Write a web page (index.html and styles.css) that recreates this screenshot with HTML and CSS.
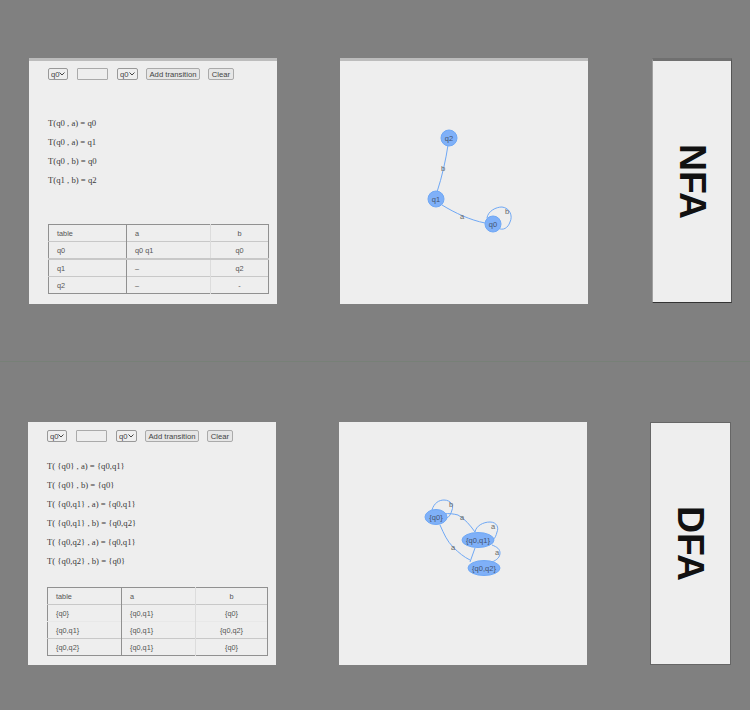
FILE: index.html
```html
<!DOCTYPE html>
<html lang="en">
<head>
    <meta charset="UTF-8">
    <title>NFA to DFA</title>
    <link rel="stylesheet" href="styles.css">
</head>
<body>
    <!-- NFA -->
    <section class="automaton automaton-nfa">
        <div class="card editor">
            <form class="controls">
                <select class="state-select"><option>q0</option></select>
                <input class="symbol-input" type="text">
                <select class="state-select"><option>q0</option></select>
                <button type="button">Add transition</button>
                <button type="button">Clear</button>
            </form>
            <ul class="transitions">
                <li>T(q0 , a) = q0</li>
                <li>T(q0 , a) = q1</li>
                <li>T(q0 , b) = q0</li>
                <li>T(q1 , b) = q2</li>
            </ul>
            <table class="state-table">
                <tr><td>table</td><td>a</td><td class="center">b</td></tr>
                <tr><td>q0</td><td>q0 q1</td><td class="center">q0</td></tr>
                <tr class="row-thick"><td>q1</td><td>–</td><td class="center">q2</td></tr>
                <tr><td>q2</td><td>–</td><td class="center">-</td></tr>
            </table>
        </div>
        <div class="card graph">
            <svg class="graph-svg" viewBox="0 0 248 243">
                <path class="edge" d="M108 84C106 98 102 116 97 131"/>
                <path class="edge" d="M102 144C115 152 130 159 145 162"/>
                <path class="edge" d="M147 157C148 150 156 146 162 146C170 147 173 155 170 161C168 167 163 170 158 167"/>
                <circle class="node" cx="109" cy="77" r="8"/>
                <circle class="node" cx="96" cy="138" r="8"/>
                <circle class="node" cx="153" cy="163" r="8"/>
                <text class="node-label" x="109" y="79.500">q2</text>
                <text class="node-label" x="96" y="140.500">q1</text>
                <text class="node-label" x="153" y="165.500">q0</text>
                <text class="edge-label" x="103" y="109.500">b</text>
                <text class="edge-label" x="122" y="157.500">a</text>
                <text class="edge-label" x="167" y="152.500">b</text>
            </svg>
        </div>
        <div class="card title"><span class="title-text">NFA</span></div>
    </section>

    <!-- DFA -->
    <section class="automaton automaton-dfa">
        <div class="card editor">
            <form class="controls">
                <select class="state-select"><option>q0</option></select>
                <input class="symbol-input" type="text">
                <select class="state-select"><option>q0</option></select>
                <button type="button">Add transition</button>
                <button type="button">Clear</button>
            </form>
            <ul class="transitions">
                <li>T( {q0} , a) = {q0,q1}</li>
                <li>T( {q0} , b) = {q0}</li>
                <li>T( {q0,q1} , a) = {q0,q1}</li>
                <li>T( {q0,q1} , b) = {q0,q2}</li>
                <li>T( {q0,q2} , a) = {q0,q1}</li>
                <li>T( {q0,q2} , b) = {q0}</li>
            </ul>
            <table class="state-table">
                <tr><td>table</td><td>a</td><td class="center">b</td></tr>
                <tr><td>{q0}</td><td>{q0,q1}</td><td class="center">{q0}</td></tr>
                <tr class="row-faint"><td>{q0,q1}</td><td>{q0,q1}</td><td class="center">{q0,q2}</td></tr>
                <tr><td>{q0,q2}</td><td>{q0,q1}</td><td class="center">{q0}</td></tr>
            </table>
        </div>
        <div class="card graph">
            <svg class="graph-svg" viewBox="0 0 248 243">
                <path class="edge" d="M93 88C95 81 100 78 105 78C112 78 115 84 113 88C112 92 110 95 108 96"/>
                <path class="edge" d="M104 92C110 91 115 92 119 93C126 97 131 103 136 110"/>
                <path class="edge" d="M136 110C137 104 144 100 151 100C158 100 160 106 158 110C157 114 156 116 154 118"/>
                <path class="edge" d="M101 103C105 112 108 119 114 125C120 131 125 135 131 138"/>
                <path class="edge" d="M136 126C134 131 133 135 131 140"/>
                <path class="edge" d="M153 123C158 125 161 127 161 131C161 135 158 138 153 140"/>
                <ellipse class="node" cx="97" cy="95" rx="11" ry="7.500"/>
                <ellipse class="node" cx="139" cy="118" rx="16" ry="7.500"/>
                <ellipse class="node" cx="145" cy="146" rx="16" ry="7.500"/>
                <text class="node-label" x="97" y="97.500">{q0}</text>
                <text class="node-label" x="139" y="120.500">{q0,q1}</text>
                <text class="node-label" x="145" y="148.500">{q0,q2}</text>
                <text class="edge-label" x="112" y="84.500">b</text>
                <text class="edge-label" x="123" y="97.500">a</text>
                <text class="edge-label" x="154" y="106.500">a</text>
                <text class="edge-label" x="114" y="127.500">a</text>
                <text class="edge-label" x="158" y="132.500">a</text>
            </svg>
        </div>
        <div class="card title"><span class="title-text">DFA</span></div>
    </section>
</body>
</html>
```

FILE: styles.css
```css
/* General */
body {
    margin: 0;
    background: #808080;
    color: #333333;
    font-family: "Liberation Sans", Arial, sans-serif;
}

.automaton {
    display: grid;
    grid-template-columns: 248px 248px 80px;
    column-gap: 63px;
}

.automaton-nfa {
    height: 362px;
    padding: 58px 0 0 29px;
    box-sizing: border-box;
    border-bottom: 1px solid #778077;
    grid-template-rows: 246px;
}

.automaton-dfa {
    padding: 60px 0 0 28px;
    grid-template-rows: 243px;
}

.card {
    background: #eeeeee;
    box-sizing: border-box;
}

.automaton-nfa .card {
    border-top: 3px solid #bcbcbc;
}

.automaton-nfa .title {
    width: 80px;
    margin-left: 1px;
    margin-bottom: 1px;
    border-top: 3px solid #707070;
    border-left: 1px solid #a0a0a0;
    border-right: 1px solid #555555;
    border-bottom: 1px solid #333333;
}

.automaton-dfa .title {
    width: 81px;
    border: 1px solid #666666;
}

/* Editor */
.editor {
    padding: 8px 8px 0 19px;
}

.automaton-nfa .editor {
    padding-top: 7px;
}

.controls {
    display: flex;
    align-items: center;
    height: 12px;
}

.controls select,
.controls input,
.controls button {
    box-sizing: border-box;
    height: 12px;
    margin: 0;
    padding: 0;
    font-family: inherit;
    font-size: 7.700px;
    color: #444444;
}

.state-select {
    width: 20px;
    padding-left: 2px !important;
    appearance: none;
    border: 1px solid #999999;
    border-radius: 2px;
    background: #eeeeee url("data:image/svg+xml,%3Csvg xmlns='http://www.w3.org/2000/svg' width='6' height='4'%3E%3Cpath d='M.5.5 3 3 5.500.5' fill='none' stroke='%23444'/%3E%3C/svg%3E") no-repeat right 2px center;
}

.symbol-input + .state-select {
    width: 21px;
}

.symbol-input {
    width: 31px;
    margin: 0 9px !important;
    background: #eeeeee;
    border: 1px solid #aaaaaa;
    border-radius: 1px;
}

.controls button {
    width: 54px;
    margin-left: 8px;
    background: #e6e6e6;
    border: 1px solid #aaaaaa;
    border-radius: 2px;
}

.controls button:last-child {
    width: 26px;
}

.transitions {
    list-style: none;
    margin: 0;
    padding: 0;
    font-family: "Liberation Serif", "Times New Roman", serif;
    font-size: 8.700px;
    line-height: 11px;
    color: #3a3a3a;
}

.transitions li + li {
    margin-top: 8px;
}

.automaton-nfa .transitions {
    margin-top: 38px;
    height: 106px;
}

.automaton-dfa .transitions {
    margin-top: 19px;
    height: 126px;
}

/* Table */
.state-table {
    width: 221px;
    border: 1px solid #909090;
    border-collapse: collapse;
    table-layout: fixed;
    font-size: 7.300px;
    color: #555555;
}

.state-table td {
    height: 16px;
    padding: 0 0 0 8px;
    border-top: 1px solid #c8c8c8;
    border-right: 1px solid #dcdcdc;
}

.state-table tr:first-child td {
    border-top: 1px solid #909090;
}

.state-table td:first-child {
    width: 69px;
    border-right-color: #909090;
}

.state-table td:nth-child(2) {
    width: 75px;
}

.state-table td:last-child {
    border-right-color: #909090;
}

.automaton-dfa .state-table td:first-child,
.automaton-dfa .state-table td:nth-child(2) {
    width: 65px;
}

.state-table .row-thick td {
    border-top: 2px solid #c8c8c8;
}

.state-table .row-faint td {
    border-top-color: #e8e8e8;
}

.state-table .center {
    padding: 0;
    text-align: center;
}

/* Graph */
.graph-svg {
    display: block;
    width: 248px;
    height: 243px;
}

.edge {
    fill: none;
    stroke: #6fa8f5;
    stroke-width: 1;
}

.node {
    fill: #7fb0f8;
    stroke: #6fa8f5;
}

.node-label,
.edge-label {
    font-size: 7.500px;
    text-anchor: middle;
    fill: #666666;
}

.node-label {
    fill: #44536e;
}

/* Title */
.title {
    display: flex;
    align-items: center;
    justify-content: center;
}

.title-text {
    writing-mode: vertical-rl;
    font-size: 37.500px;
    font-weight: 700;
    color: #111111;
    line-height: 1;
}
```
